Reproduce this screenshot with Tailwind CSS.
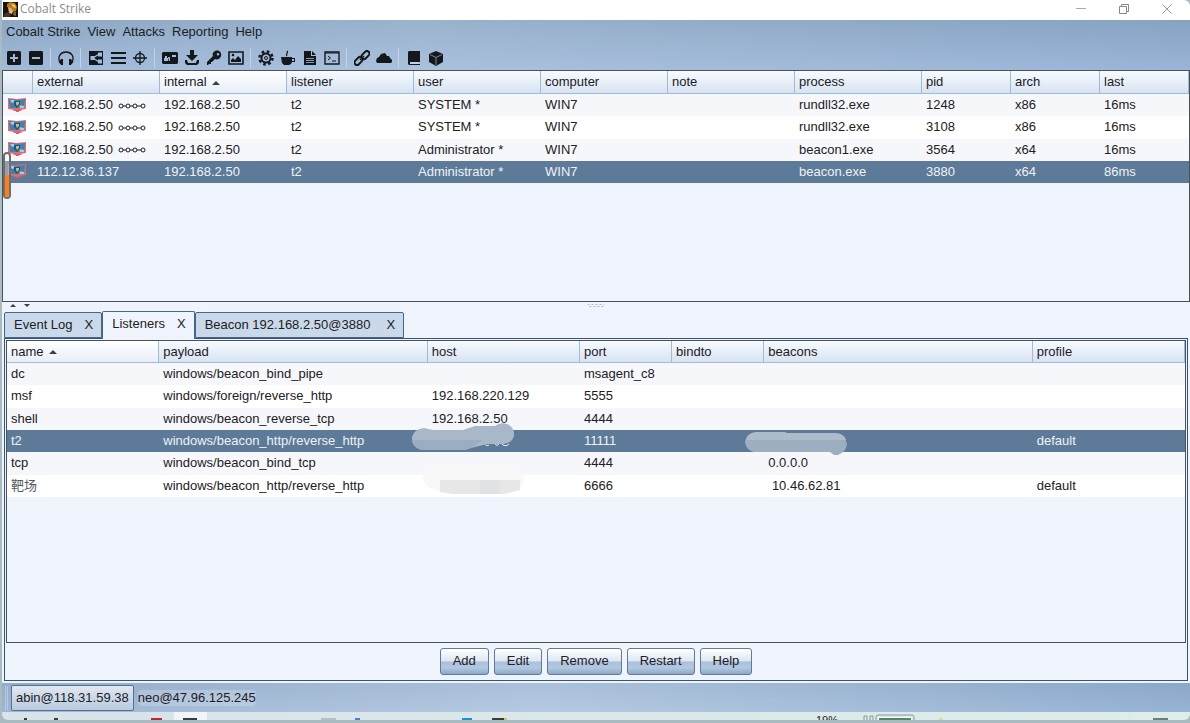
<!DOCTYPE html>
<html lang="en">

<head>
    <meta charset="utf-8">
    <meta name="viewport" content="width=device-width, initial-scale=1">
    <title>Cobalt Strike</title>
    <script src="https://cdn.jsdelivr.net/npm/@tailwindcss/browser@4"></script>
</head>

<body class="h-screen flex flex-col overflow-hidden bg-[#a8bcc0] pl-0.5 pb-[3px] font-['Liberation_Sans','Noto_Sans_CJK_SC',sans-serif] text-[13px] leading-4 text-[#1c2024]">
    <!-- Shared icons -->
    <svg class="hidden">
        <symbol id="host" viewBox="0 0 18 15">
            <path d="M0 0l9 1 9-1v11l-6 1H6l-6-1z" fill="#dc6c76" />
            <path d="M1 1l8 1 8-1-1 9H2z" fill="#3f82b0" />
            <path d="M2 2h4l1 2-3 1zM11 7l5 1v2h-4z" fill="#a3cde2" />
            <path d="M6 3h6v4l-3 3-3-3z" fill="#275477" />
            <path d="M8 4h3v2L9 8 8 6z" fill="#c3bd76" />
            <path d="M6 12h7l1 1h-3v1H8v-1H5z" fill="#e35f68" />
        </symbol>
        <symbol id="chain" viewBox="0 0 28 8">
            <g fill="none" stroke="currentColor">
                <circle cx="3" cy="4" r="2" /><circle cx="10" cy="4" r="2" /><circle cx="17" cy="4" r="2" /><circle cx="25" cy="4" r="2" />
                <path d="M5 4h3M12 4h3M19 4h4" />
            </g>
        </symbol>
        <symbol id="up" viewBox="0 0 8 4"><path d="M0 4l4-4 4 4z" fill="#3c4044" /></symbol>
    </svg>

    <!-- Title bar -->
    <header class="flex h-5 shrink-0 items-center bg-white rounded-tr-md pr-0.5 pb-0.5 text-[#8c8c8c]">
        <svg class="ml-px size-[15px]" viewBox="0 0 15 15">
            <path d="M0 0h15v15H0z" fill="#171310" />
            <path d="M4 2l3-2 5 1 2 4-1 4-4 1-2-4-3-1z" fill="#b8791d" />
            <path d="M8 2l4 1 1 3-3-1z" fill="#f3cf62" />
            <path d="M5 5l3 1 2 3-1 3-3-1z" fill="#e5b183" />
            <path d="M1 12l4-2 3 3-2 2H1z" fill="#4a351e" />
            <path d="M11 9l2 1v4l-3-1z" fill="#8a6229" />
        </svg>
        <h1 class="ml-0.5 font-['Open_Sans'] text-[12px]">Cobalt Strike</h1>
        <div class="ml-auto flex">
            <button class="w-[42px] flex justify-center" aria-label="Minimize"><svg class="size-3" viewBox="0 0 12 12" fill="none" stroke="#aaa"><path d="M1 5.500h10" /></svg></button>
            <button class="w-[43px] flex justify-center" aria-label="Restore"><svg class="size-3" viewBox="0 0 12 12" fill="none" stroke="#888"><path d="M1.500 3.500h7v7h-7zM3.500 3V1.500h7v7H9" /></svg></button>
            <button class="w-[43px] flex justify-center" aria-label="Close"><svg class="size-3" viewBox="0 0 12 12" fill="none" stroke="#999"><path d="M1.500 1.500l9 9M10.500 1.500l-9 9" /></svg></button>
        </div>
    </header>

    <div class="h-[50px] shrink-0 bg-[linear-gradient(90deg,#ffffff10,#ffffff2a_35%,#ffffff00),linear-gradient(#86a3c2,#9ab5d7)]">
        <!-- Menu -->
        <nav class="flex h-6 items-center gap-[7px] pl-1">
            <button>Cobalt Strike</button>
            <button>View</button>
            <button>Attacks</button>
            <button>Reporting</button>
            <button>Help</button>
        </nav>

        <!-- Toolbar -->
        <div class="flex h-7 items-center pl-px text-[#14181d] *:[button]:flex *:[button]:w-[22px] *:[button]:justify-center *:[i]:mr-1 *:[i]:ml-[3px] *:[i]:h-5 *:[i]:w-px *:[i]:bg-[#c3d3e6] [&_svg]:size-4">
            <button aria-label="New connection"><svg viewBox="0 0 16 16"><path fill="currentColor" fill-rule="evenodd" d="M2 1h12l1 1v12l-1 1H2l-1-1V2zM7 4v3H4v2h3v3h2V9h3V7H9V4z" /></svg></button>
            <button aria-label="Disconnect"><svg viewBox="0 0 16 16"><path fill="currentColor" fill-rule="evenodd" d="M2 1h12l1 1v12l-1 1H2l-1-1V2zM4 7v2h8V7z" /></svg></button>
            <i></i>
            <button aria-label="Listeners"><svg viewBox="0 0 16 16"><path d="M2 13C-1 6 3 2 8 2s9 4 6 11" fill="none" stroke="currentColor" stroke-width="1.300" /><path fill="currentColor" d="M3 9h2v6H3l-2-3zM13 9h-2v6h2l2-3z" /></svg></button>
            <i></i>
            <button aria-label="Pivot graph"><svg viewBox="0 0 16 16"><path fill="currentColor" d="M1 1h14v14H1z" /><path d="M5 8l6-4M5 8l6 4" stroke="#a3bcdb" stroke-width="1.200" /><path fill="#a3bcdb" d="M2.500 6h4v4h-4zM10 2.500h4v4h-4zM10 9.500h4v4h-4z" /></svg></button>
            <button aria-label="Session table"><svg viewBox="0 0 16 16"><path fill="currentColor" d="M1 2h15v2H1zM1 7h15v2H1zM1 12h15v2H1z" /></svg></button>
            <button aria-label="Target table"><svg viewBox="0 0 16 16"><g fill="none" stroke="currentColor" stroke-width="1.300"><circle cx="8" cy="8" r="4.500" /><path d="M8 1v14M1 8h14" /></g></svg></button>
            <i></i>
            <button aria-label="Credentials"><svg viewBox="0 0 16 16"><path fill="currentColor" d="M2 2h13l1 1v10l-1 1H1l-1-1V3l1-1z" /><path fill="#a3bcdb" d="M3 6h2v2h1v3H2V8h1zM6 7h2v4H7zM10 5h4v2h-4z" /></svg></button>
            <button aria-label="Downloads"><svg viewBox="0 0 16 16"><path fill="currentColor" d="M6 0h4v5h4l-6 6-6-6h4zM1 10h2l1 3h8l1-3h2v3l-2 2H3l-2-2z" /></svg></button>
            <button aria-label="Keystrokes"><svg viewBox="0 0 16 16"><path fill="currentColor" fill-rule="evenodd" d="M9 1c5-2 8 3 5 7-1 1-3 2-5 1l-1 1-1 1-1 1H5v2H3l-1 1H1v-3l6-6c-1-2 0-4 2-5zm3 2a1.300 1.300 0 100 2.600A1.300 1.300 0 0012 3z" /></svg></button>
            <button aria-label="Screenshots"><svg viewBox="0 0 16 16"><path d="M1 2h14v12H1z" fill="none" stroke="currentColor" stroke-width="1.600" /><path fill="currentColor" d="M3 12v-2l2-2 2 2 3-4 3 3v3z" /><circle cx="5" cy="5" r="1.300" fill="currentColor" /></svg></button>
            <i></i>
            <button aria-label="Payload generator"><svg viewBox="0 0 16 16"><g fill="none" stroke="currentColor"><circle cx="8" cy="8" r="6.500" stroke-width="2.500" stroke-dasharray="2.600 2.500" /><circle cx="8" cy="8" r="4.500" stroke-width="2" /><circle cx="8" cy="8" r="1.500" /></g></svg></button>
            <button aria-label="Java payload"><svg viewBox="0 0 16 16"><path fill="currentColor" d="M1 7h11v1h3v4h-3l-1 2-2 1H4l-2-2zM12 9v2h2V9z" fill-rule="evenodd" /><path d="M7 6c-2-2 2-3 0-5" fill="none" stroke="currentColor" stroke-width="1.300" /></svg></button>
            <button aria-label="Office macro"><svg viewBox="0 0 16 16"><path fill="currentColor" d="M2 1h7v5h5v9H2z" /><path fill="currentColor" d="M10 1l4 4h-4z" /><path d="M4 8.500h8M4 10.500h8M4 12.500h8" stroke="#a3bcdb" stroke-width=".8" /></svg></button>
            <button aria-label="Scripted web delivery"><svg viewBox="0 0 16 16"><g fill="none" stroke="currentColor"><path d="M1 2h14v12H1z" stroke-width="1.400" /><path d="M1 3h14" /><path d="M4 6l2.500 2L4 10M8 11h4" /></g></svg></button>
            <i></i>
            <button aria-label="Host file"><svg viewBox="0 0 16 16"><g fill="none" stroke="currentColor" stroke-width="2"><rect x="7" y="2.500" width="9" height="5" rx="2.500" transform="rotate(-45 11.500 5)" /><rect x="0" y="8.500" width="9" height="5" rx="2.500" transform="rotate(-45 4.500 11)" /><path d="M6 10l4-4" stroke-width="1.500" /></g></svg></button>
            <button aria-label="Sites"><svg viewBox="0 0 16 16"><path fill="currentColor" d="M3 13H1l-1-2 1-3 2-1 2-3 4-1 2 3h2l1 2 2 2v2l-1 1z" /></svg></button>
            <i></i>
            <button aria-label="Help"><svg viewBox="0 0 16 16"><path fill="currentColor" d="M3 1h11v11H4v2h10v1H3l-1-1V2z" /><path d="M4 13h9" stroke="#d7e2ef" /></svg></button>
            <button aria-label="About"><svg viewBox="0 0 16 16"><path fill="currentColor" d="M8 1l7 3v8l-7 4-7-4V4z" /><path d="M2 4.500l6 3 6-3M8 8v7" fill="none" stroke="#8ba4c0" stroke-width=".8" /></svg></button>
        </div>
    </div>

    <!-- Sessions -->
    <section class="relative h-[232px] shrink-0 border border-[#4c5156] bg-[#eff3fb]">
        <table class="h-[112px] w-full table-fixed border-separate border-spacing-0 text-left [&_td]:pl-1 [&_td]:py-0 [&_th]:border-r [&_th]:border-b [&_th]:border-[#9dbbdc] [&_th]:pl-1 [&_th]:py-0 [&_th]:font-normal">
            <colgroup>
                <col class="w-[30px]"><col class="w-[127px]"><col class="w-[127px]"><col class="w-[127px]"><col class="w-[127px]"><col class="w-[127px]"><col class="w-[127px]"><col class="w-[127px]"><col class="w-[89px]"><col class="w-[89px]"><col class="w-[89px]">
            </colgroup>
            <thead>
                <tr class="h-[23px] bg-linear-to-b from-[#f8fbff] to-[#d5e2f0]">
                    <th></th><th>external</th><th class="bg-linear-to-b from-white to-[#e9eff8]">internal <svg class="ml-0.5 inline h-1 w-2"><use href="#up" /></svg></th><th>listener</th><th>user</th><th>computer</th><th>note</th><th>process</th><th>pid</th><th>arch</th><th>last</th>
                </tr>
            </thead>
            <tbody>
                <tr class="bg-[#f6f7fa]">
                    <td><svg class="ml-px block h-[15px] w-[18px]"><use href="#host" /></svg></td><td class="whitespace-nowrap">192.168.2.50 <svg class="ml-px inline h-2 w-7"><use href="#chain" /></svg></td><td>192.168.2.50</td><td>t2</td><td>SYSTEM *</td><td>WIN7</td><td></td><td>rundll32.exe</td><td>1248</td><td>x86</td><td>16ms</td>
                </tr>
                <tr class="bg-white">
                    <td><svg class="ml-px block h-[15px] w-[18px]"><use href="#host" /></svg></td><td class="whitespace-nowrap">192.168.2.50 <svg class="ml-px inline h-2 w-7"><use href="#chain" /></svg></td><td>192.168.2.50</td><td>t2</td><td>SYSTEM *</td><td>WIN7</td><td></td><td>rundll32.exe</td><td>3108</td><td>x86</td><td>16ms</td>
                </tr>
                <tr class="bg-[#f6f7fa]">
                    <td><svg class="ml-px block h-[15px] w-[18px]"><use href="#host" /></svg></td><td class="whitespace-nowrap">192.168.2.50 <svg class="ml-px inline h-2 w-7"><use href="#chain" /></svg></td><td>192.168.2.50</td><td>t2</td><td>Administrator *</td><td>WIN7</td><td></td><td>beacon1.exe</td><td>3564</td><td>x64</td><td>16ms</td>
                </tr>
                <tr class="bg-[#5d7a98] text-[#eef2f7]">
                    <td><svg class="ml-px block h-[15px] w-[18px]"><use href="#host" /></svg></td><td>112.12.36.137</td><td>192.168.2.50</td><td>t2</td><td>Administrator *</td><td>WIN7</td><td></td><td>beacon.exe</td><td>3880</td><td>x64</td><td>86ms</td>
                </tr>
            </tbody>
        </table>
        <!-- level gauge over the left edge -->
        <div class="absolute top-[81px] left-0 flex h-[47px] w-2 flex-col justify-end rounded-full border-2 border-[#6e6e6e] bg-white/30">
            <div class="h-[22px] rounded-b-sm bg-[#ff7d1e]"></div>
        </div>
    </section>

    <div class="flex min-h-0 flex-1 flex-col bg-[#eff3fb]">
        <!-- Splitter -->
        <div class="relative flex h-[9px] shrink-0 items-start gap-2 pt-0.5 pl-2">
            <svg class="h-[3px] w-1.5"><path d="M0 3l3-3 3 3z" fill="#3c4044" /></svg>
            <svg class="h-[3px] w-1.5"><path d="M0 0h6L3 3z" fill="#3c4044" /></svg>
            <svg class="absolute top-px left-1/2 h-1 w-[17px] -translate-x-1/2" fill="none" stroke="#b4bcc8"><path d="M0 1.500h17" stroke-dasharray="2 2" /><path d="M2 3.500h15" stroke-dasharray="2 2" /></svg>
        </div>

        <!-- Tabs -->
        <div class="flex h-[27px] shrink-0 items-end px-0.5">
            <div class="flex h-[26px] items-center gap-3 rounded-t-xs border border-[#45658a] bg-[#c9d9ea] px-2 pl-[9px]"><button>Event Log</button><button aria-label="Close Event Log">X</button></div>
            <div class="z-10 -mb-px flex h-7 items-center gap-3 rounded-t-xs border border-b-0 border-[#45658a] bg-[#eff3fb] px-2 pb-[3px] pl-[9px]"><button>Listeners</button><button aria-label="Close Listeners">X</button></div>
            <div class="flex h-[26px] items-center gap-4 rounded-t-xs border border-[#45658a] bg-[#c9d9ea] px-2 pl-[9px]"><button>Beacon 192.168.2.50@3880</button><button aria-label="Close Beacon">X</button></div>
        </div>

        <!-- Listeners panel -->
        <main class="mx-0.5 mb-0.5 flex min-h-0 flex-1 flex-col border border-[#345577] p-px">
            <div class="min-h-0 flex-1 border border-[#4c5156]">
                <table class="h-[156px] w-full table-fixed border-separate border-spacing-0 text-left [&_td]:pl-1 [&_td]:py-0 [&_th]:border-r [&_th]:border-b [&_th]:border-[#9dbbdc] [&_th]:pl-1 [&_th]:py-0 [&_th]:font-normal">
                    <colgroup>
                        <col class="w-[152px]"><col class="w-[268px]"><col class="w-[152px]"><col class="w-[92px]"><col class="w-[92px]"><col class="w-[268px]"><col class="w-[152px]">
                    </colgroup>
                    <thead>
                        <tr class="h-[22px] bg-linear-to-b from-[#f8fbff] to-[#d5e2f0]">
                            <th class="bg-linear-to-b from-white to-[#e9eff8]">name <svg class="ml-0.5 inline h-1 w-2"><use href="#up" /></svg></th><th>payload</th><th>host</th><th>port</th><th>bindto</th><th>beacons</th><th>profile</th>
                        </tr>
                    </thead>
                    <tbody>
                        <tr class="bg-[#f6f7fa]"><td>dc</td><td>windows/beacon_bind_pipe</td><td></td><td>msagent_c8</td><td></td><td></td><td></td></tr>
                        <tr class="bg-white"><td>msf</td><td>windows/foreign/reverse_http</td><td>192.168.220.129</td><td>5555</td><td></td><td></td><td></td></tr>
                        <tr class="bg-[#f6f7fa]"><td>shell</td><td>windows/beacon_reverse_tcp</td><td>192.168.2.50</td><td>4444</td><td></td><td></td><td></td></tr>
                        <tr class="bg-[#5d7a98] text-[#eef2f7]">
                            <td>t2</td><td>windows/beacon_http/reverse_http</td>
                            <td class="relative"><svg class="absolute -top-[7px] -left-[17px] h-7 w-[104px]" viewBox="0 0 104 28">
                                    <path d="M74 21q1 3 4 1M84 21q2 3 4 0M90 20q4 5 8 1" stroke="#e8eef5" fill="none" />
                                    <path d="M1 14q2-8 12-9l9 2h30l12-4h20q5-4 12-2 8 3 7 12-2 7-10 8H76l-12 3-10 3H12Q0 25 1 14z" fill="#a9b8c9" />
                                    <path d="M1 17h70l-9 7-9 3H12Q2 25 1 17z" fill="#9badc2" />
                                </svg></td>
                            <td>11111</td><td></td>
                            <td class="relative"><svg class="absolute top-0.5 -left-5 h-6 w-[104px]" viewBox="0 0 104 24">
                                    <path d="M1 10Q2 1 12 0h28l3 1h49q10 2 10 8l1 3q-1 8-9 11H90l-4-3H10Q2 18 1 10z" fill="#9eaec1" />
                                    <path d="M2 8Q4 1 12 0h28l3 1h49q8 1 10 7z" fill="#aebbcb" />
                                </svg></td>
                            <td>default</td>
                        </tr>
                        <tr class="bg-[#f6f7fa]"><td>tcp</td><td>windows/beacon_bind_tcp</td><td></td><td>4444</td><td></td><td>0.0.0.0</td><td></td></tr>
                        <tr class="bg-white">
                            <td class="text-[#55595e]">靶场</td><td>windows/beacon_http/reverse_http</td>
                            <td class="relative"><svg class="absolute -top-[11px] -left-1.5 h-[31px] w-[104px]" viewBox="0 0 104 31">
                                    <path d="M1 14Q2 7 20 4q30-8 60 0 22 4 23 12l-6 10-18 4H32l-14-2Q0 22 1 14z" fill="#f8f8f8" />
                                    <path d="M18 16h80v10q-8 2-16 4H30l-12-2z" fill="#e7e7e8" />
                                    <path d="M58 16h20v14H58z" fill="#e1e2e4" />
                                </svg></td>
                            <td>6666</td><td></td><td>&nbsp;10.46.62.81</td><td>default</td>
                        </tr>
                    </tbody>
                </table>
            </div>
            <div class="flex h-9 shrink-0 items-center justify-center gap-[5px] *:h-[27px] *:rounded-[3px] *:border *:border-[#5e7b9b] *:bg-[linear-gradient(#ffffff,#dde6f1_48%,#a9c0dc_52%,#b3c8e0_75%,#8ba8c8)] *:px-3">
                <button>Add</button>
                <button>Edit</button>
                <button>Remove</button>
                <button>Restart</button>
                <button>Help</button>
            </div>
        </main>
    </div>

    <!-- Team servers -->
    <footer class="flex h-[29px] shrink-0 items-center bg-[linear-gradient(#00000008,#ffffff10),linear-gradient(90deg,#98b2d1,#b0c6e0_45%,#90aed0)] pl-[3px]">
        <div class="mr-[3px] h-6 w-[3px] border-x border-[#b9cbe0]"></div>
        <button class="h-[26px] rounded-xs border border-[#56718f] bg-linear-to-b from-[#e0e7f0] to-[#b9cbe0] px-1">abin@118.31.59.38</button>
        <button class="ml-1 rounded-sm bg-white/20">neo@47.96.125.245</button>
    </footer>

    <!-- Strip under the window -->
    <div class="flex h-2 shrink-0 justify-between overflow-hidden rounded-b-md bg-linear-to-r from-[#d8e3ea] to-[#deede9]">
        <svg class="h-2 w-[510px]" viewBox="0 0 510 8">
            <path d="M172 0h33v8h-33z" fill="#f1f5f7" />
            <path d="M22 7h3M52 7h4M181 7h14M490 7h12" stroke="#3b3b40" stroke-width="2" />
            <path d="M149 7h11" stroke="#c8203a" stroke-width="2" />
            <path d="M319 7h15" stroke="#b3bfc8" stroke-width="2" />
            <path d="M353 7h5" stroke="#4a7fd0" stroke-width="2" />
            <path d="M460 7h10" stroke="#1e90cf" stroke-width="2" />
            <path d="M502 7h3" stroke="#d2c25a" stroke-width="2" />
        </svg>
        <div class="flex items-start gap-6">
            <span class="pt-0.5 text-[11px] leading-3">19%</span>
            <svg class="h-2 w-[328px]" viewBox="0 0 328 8" fill="none">
                <path d="M2 8V4h3v4M8 8V4h3v4M14 9V5q0-2 2-2h34q2 0 2 2v4" stroke="#8d9796" />
                <path d="M16 5h34v4H16z" fill="#fff" />
                <path d="M17 7h32" stroke="#4c8a62" stroke-width="2" />
                <path d="M77 7h4" stroke="#ecc66a" />
                <path d="M291 7h15" stroke="#6b7f7c" stroke-width="2" />
            </svg>
        </div>
    </div>
</body>

</html>
